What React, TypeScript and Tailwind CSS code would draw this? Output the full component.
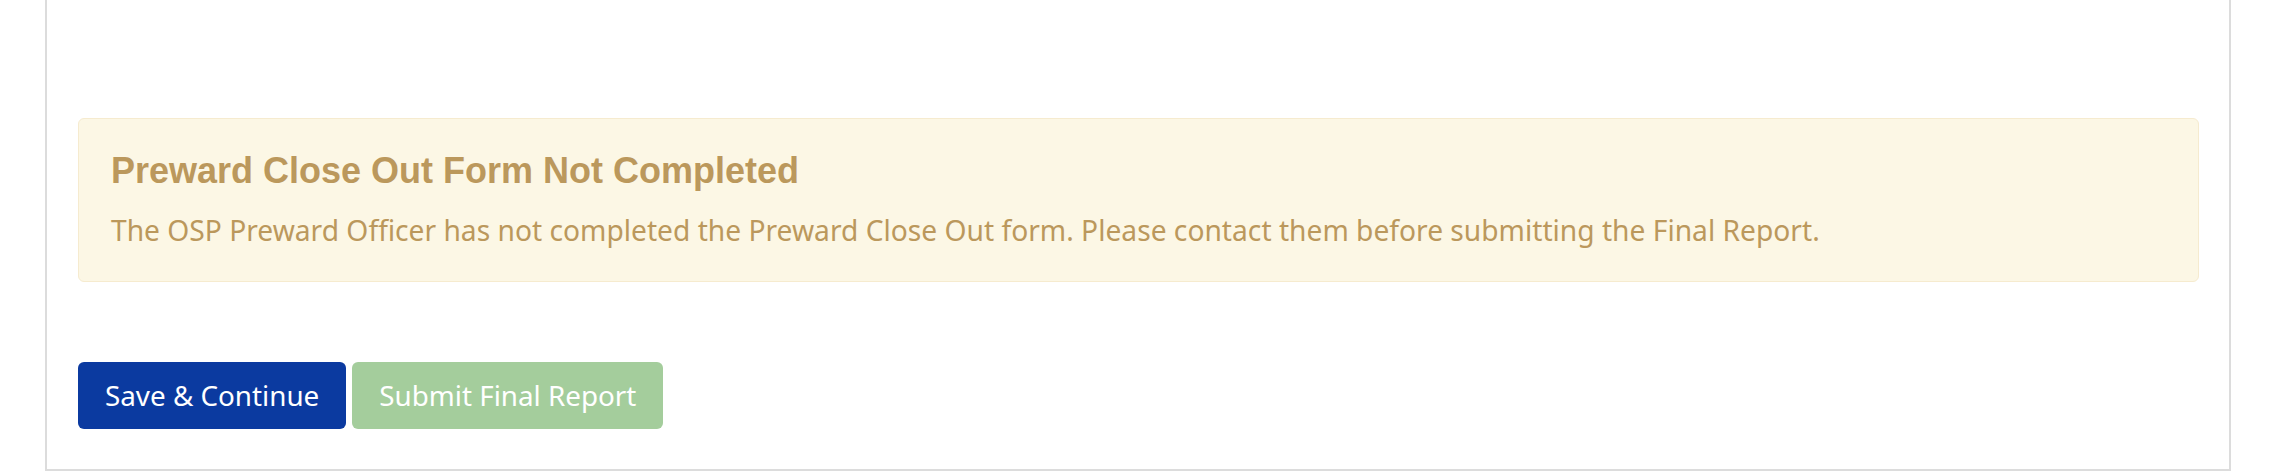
import React from "react";

const App: React.FC = () => {
    return (
        <div className="w-[2275px] h-[471px] bg-white overflow-hidden">
            <div className="ml-[45px] w-[2186px] h-[471px] border-x-2 border-b-2 border-[#dcdcdc] pt-[118px] pl-[31px] pr-[30px] flex flex-col">
                {/* warning alert */}
                <div className="h-[164px] rounded-[6px] border-[1.5px] border-[#f6ebcf] bg-[#fcf7e5] pl-[32px] pt-[34px] text-[#bb985c]">
                    <h4 className="font-['Liberation_Sans',Arial,sans-serif] font-bold text-[36px] leading-none">
                        Preward Close Out Form Not Completed
                    </h4>
                    <p className="mt-[20px] font-['Noto_Sans',sans-serif] text-[28.2px] leading-[1.5]">
                        The OSP Preward Officer has not completed the Preward Close Out form. Please contact them before submitting the Final Report.
                    </p>
                </div>

                <div className="mt-[80px] flex gap-[6px] font-['Noto_Sans',sans-serif] text-[27.8px] text-white">
                    <button className="h-[67px] px-[27px] rounded-[6px] bg-[#0b3aa0]">
                        Save &amp; Continue
                    </button>
                    <button className="h-[67px] px-[27px] rounded-[6px] bg-[#a4cd9c] cursor-not-allowed" disabled>
                        Submit Final Report
                    </button>
                </div>
            </div>
        </div>
    );
};

export default App;
